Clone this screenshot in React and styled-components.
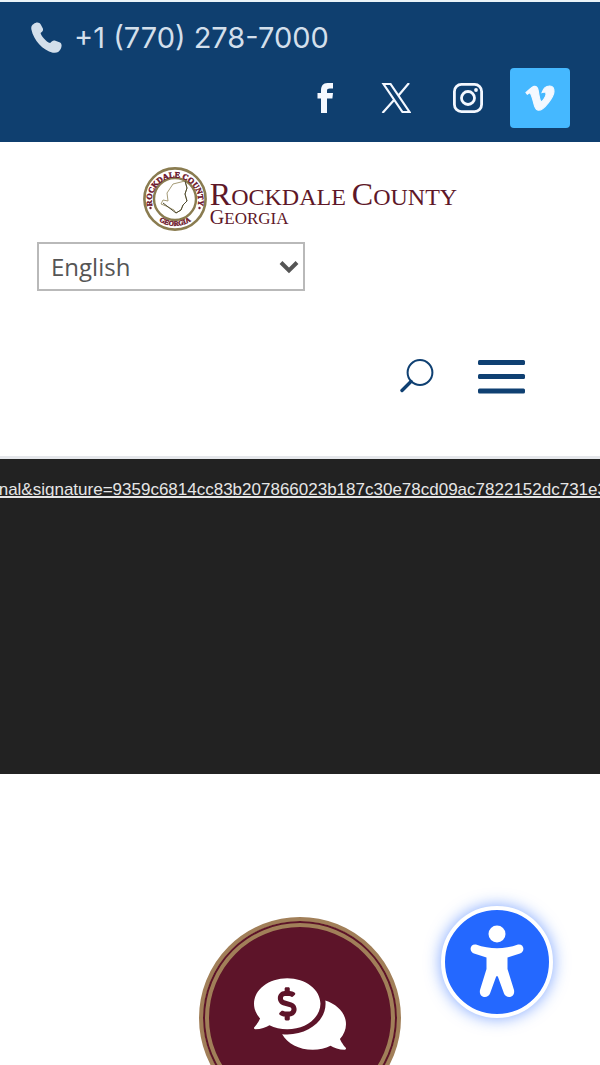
import React, { useState } from 'react'
import styled, { createGlobalStyle } from 'styled-components'
import { FaVimeoV, FaCommentsDollar } from 'react-icons/fa'

const VIDEO_LINK = "rnal&signature=9359c6814cc83b207866023b187c30e78cd09ac7822152dc731e3"

const App = () => {
  const [language, setLanguage] = useState("en")

  return (
    <>
      <GlobalStyle />
      <TopBar>
        <Phone href="tel:+17702787000">
          <PhoneIcon />
          <span>+1 (770) 278-7000</span>
        </Phone>
        <SocialList>
          <SocialLink href="#facebook" aria-label="Facebook"><FacebookIcon /></SocialLink>
          <SocialLink href="#x" aria-label="X"><XIcon /></SocialLink>
          <SocialLink href="#instagram" aria-label="Instagram"><InstagramIcon /></SocialLink>
          <SocialLink href="#vimeo" aria-label="Vimeo" $bg="#45b8ff">
            <FaVimeoV size={32} stroke="currentColor" strokeWidth={18} />
          </SocialLink>
        </SocialList>
      </TopBar>

      <Header>
        <Logo href="#home">
          <Seal />
          <LogoText>
            <LogoLine $size={32} $small={24} $line={28}>
              <b>R</b>ockdale <b>C</b>ounty
            </LogoLine>
            <LogoLine $size={20} $small={17} $line={12}>
              <b>G</b>eorgia
            </LogoLine>
          </LogoText>
        </Logo>

        <LanguageBox>
          <select aria-label="Language" value={language} onChange={(e) => setLanguage(e.target.value)}>
            <option value="en">English</option>
            <option value="es">Spanish</option>
          </select>
          <svg width="20" height="14" viewBox="0 0 20 14" fill="none" stroke="#555" strokeWidth="4">
            <path d="M2 2.500 10 10.500 18 2.500" />
          </svg>
        </LanguageBox>

        <Nav>
          <IconButton aria-label="Search">
            <svg width="34" height="36" viewBox="0 0 34 36" fill="none" stroke="#0f4072">
              <circle cx="20" cy="13.500" r="12.400" strokeWidth="2" />
              <path d="M11 22.500 2 31.500" strokeWidth="3.400" strokeLinecap="round" />
            </svg>
          </IconButton>
          <IconButton aria-label="Menu">
            <svg width="48" height="34" viewBox="0 0 48 34" fill="#0f4072">
              <rect x="0" y="0" width="47" height="5" rx="1.500" />
              <rect x="0" y="14" width="47" height="5" rx="1.500" />
              <rect x="0" y="28.500" width="47" height="5" rx="1.500" />
            </svg>
          </IconButton>
        </Nav>
      </Header>

      <Video>
        <a href="#video">{VIDEO_LINK}</a>
      </Video>

      <Services>
        <ServiceCircle href="#payments" aria-label="Payments">
          <FaCommentsDollar size={92} />
        </ServiceCircle>
      </Services>

      <AccessButton aria-label="Accessibility menu">
        <svg width="56" height="74" viewBox="0 0 56 74" fill="#fff">
          <circle cx="28" cy="9" r="8.500" />
          <path d="M7 19.500Q28 27 49 19.500C55 18.500 56.500 26 51 28.500L38.500 32.500V44L45 65C46.500 73 37 74 35 68.500L29 52Q28 50 27 52L21 68.500C19 74 9.500 73 11 65L17.500 44V32.500L5 28.500C-0.500 26 1 18.500 7 19.500Z" />
        </svg>
      </AccessButton>
    </>
  )
}

export default App

const PhoneIcon = () => (
  <svg width="31" height="31" viewBox="0 0 94 94" fill="currentColor">
    <path d="M8 6C16-1 26 0 30 8L36 20C38 27 34 30 29 33C30 40 46 60 58 64C64 58 67 54 74 57L88 62C94 66 94 74 90 82C84 92 78 95 66 93C36 86 8 56 1 22C0 14 2 10 8 6Z" />
  </svg>
)

const FacebookIcon = () => (
  <svg width="30" height="30" viewBox="0 0 30 30" fill="currentColor">
    <path d="M8.500 10H12V7.500C12 3 14 0 18.500 0H24V5.500H20.800C18.800 5.500 18 6.200 18 7.800V10H24L23.400 15.500H18V30H12V15.500H8.500Z" />
  </svg>
)

const XIcon = () => (
  <svg width="30" height="30" viewBox="0 0 30 30" fill="none" stroke="currentColor" strokeWidth="2.200">
    <path d="M2.500 1H9.500L28.500 29H21.500ZM28 0 17.500 12.500M1.500 30 13.500 16.500" />
  </svg>
)

const InstagramIcon = () => (
  <svg width="30" height="30" viewBox="0 0 30 30" fill="none" stroke="currentColor" strokeWidth="2.800">
    <rect x="1.400" y="1.400" width="27.200" height="27.200" rx="7" />
    <circle cx="15" cy="15" r="6.500" />
    <circle cx="23" cy="7" r="1.900" fill="currentColor" stroke="none" />
  </svg>
)

const Seal = () => (
  <svg width="64" height="64" viewBox="0 0 64 64" fill="none">
    <defs>
      <path id="seal-top" d="M9.200 38A23.200 23.200 0 1 1 54.800 38" />
      <path id="seal-bottom" d="M13 51.500A28 28 0 0 0 51 51.500" />
    </defs>
    <circle cx="32" cy="32" r="30.600" stroke="#8a7c50" strokeWidth="2.600" />
    <circle cx="32" cy="32" r="21" stroke="#8a7c50" strokeWidth="2.400" />
    <path d="M30 17 42 14 44 21 42 27 44 34 40 38 38 43 33 46 31 43 23 39 18 37 20 33 25 34 24 26Z" stroke="#a59b76" strokeWidth="1" />
    <path d="M42 14 44 21 42 27 44 34 40 38 38 43 33 46 20 36" stroke="#4d492f" strokeWidth="1" />
    <g fill="#6b1328" stroke="#6b1328" strokeWidth="0.400" fontFamily="'Liberation Serif', serif" fontWeight="bold">
      <text fontSize="8"><textPath href="#seal-top" startOffset="50%" textAnchor="middle">ROCKDALE COUNTY</textPath></text>
      <text fontSize="7"><textPath href="#seal-bottom" startOffset="50%" textAnchor="middle">GEORGIA</textPath></text>
      <circle cx="7.500" cy="41" r="1" />
      <circle cx="56.500" cy="41" r="1" />
    </g>
  </svg>
)

const GlobalStyle = createGlobalStyle`
  * {
    box-sizing: border-box;
  }
  body {
    margin: 0;
    background: #fff;
    font-family: "Open Sans", sans-serif;
  }
  svg {
    display: block;
  }
`

const TopBar = styled.div`
  display: flex;
  flex-direction: column;
  padding: 16px 30px 14px 31px;
  border-top: 2px solid #eaf3f8;
  background: #0f3f6f;
`

const Phone = styled.a`
  display: flex;
  align-items: center;
  gap: 12px;
  height: 38px;
  margin-bottom: 12px;
  color: #d3dfeb;
  font-family: Inter, sans-serif;
  font-size: 29px;
  text-decoration: none;
`

const SocialList = styled.div`
  display: flex;
  justify-content: flex-end;
  gap: 12px;
`

const SocialLink = styled.a`
  display: flex;
  align-items: center;
  justify-content: center;
  width: 60px;
  height: 60px;
  border-radius: 4px;
  background: ${(props) => props.$bg || "transparent"};
  color: #f4f8ff;
`

const Header = styled.header`
  display: flex;
  flex-direction: column;
  padding: 25px 37px 61px;
  border-bottom: 3px solid #e5e7eb;
`

const Logo = styled.a`
  display: flex;
  align-items: center;
  justify-content: center;
  gap: 3px;
  margin-bottom: 11px;
  text-decoration: none;
`

const LogoText = styled.div`
  display: flex;
  flex-direction: column;
  padding-top: 6px;
`

const LogoLine = styled.span`
  color: #5e1728;
  font-family: "Liberation Serif", serif;
  font-size: ${(props) => props.$small}px;
  line-height: ${(props) => props.$line}px;
  text-transform: uppercase;
  white-space: nowrap;

  b {
    font-size: ${(props) => props.$size}px;
    font-weight: normal;
  }
`

const LanguageBox = styled.div`
  position: relative;
  width: 268px;

  select {
    appearance: none;
    display: block;
    width: 100%;
    height: 49px;
    padding: 0 12px;
    border: 2px solid #b9b9b9;
    border-radius: 0;
    background: #fff;
    color: #555;
    font-family: "Open Sans", sans-serif;
    font-size: 24px;
  }
  svg {
    position: absolute;
    right: 6px;
    top: 18px;
    pointer-events: none;
  }
`

const Nav = styled.nav`
  display: flex;
  justify-content: flex-end;
  align-items: center;
  gap: 44px;
  margin-top: 68px;
  padding-right: 37px;
`

const IconButton = styled.button`
  padding: 0;
  border: none;
  background: none;
  cursor: pointer;
`

const Video = styled.div`
  display: flex;
  justify-content: center;
  height: 315px;
  padding-top: 21px;
  overflow: hidden;
  background: #222;

  a {
    color: #e6e6e6;
    font-family: "Liberation Sans", sans-serif;
    font-size: 17px;
    line-height: 20px;
    white-space: nowrap;
    text-decoration: underline;
    text-decoration-thickness: 2px;
    text-decoration-skip-ink: none;
  }
`

const Services = styled.section`
  display: flex;
  justify-content: center;
  padding: 143px 0 40px;
`

const ServiceCircle = styled.a`
  display: flex;
  align-items: center;
  justify-content: center;
  width: 202px;
  height: 202px;
  padding-bottom: 8px;
  border: 4px solid #a17f59;
  border-radius: 50%;
  background: #5d1429;
  box-shadow: inset 0 0 0 2px #5d1429, inset 0 0 0 6px #a17f59;
  color: #fff;
`

const AccessButton = styled.button`
  position: fixed;
  right: 47px;
  bottom: 47px;
  display: flex;
  align-items: center;
  justify-content: center;
  width: 112px;
  height: 112px;
  padding: 0;
  border: 4px solid #fff;
  border-radius: 50%;
  background: #2468ff;
  box-shadow: 0 0 16px rgba(36, 104, 255, 0.6);
  cursor: pointer;
`
